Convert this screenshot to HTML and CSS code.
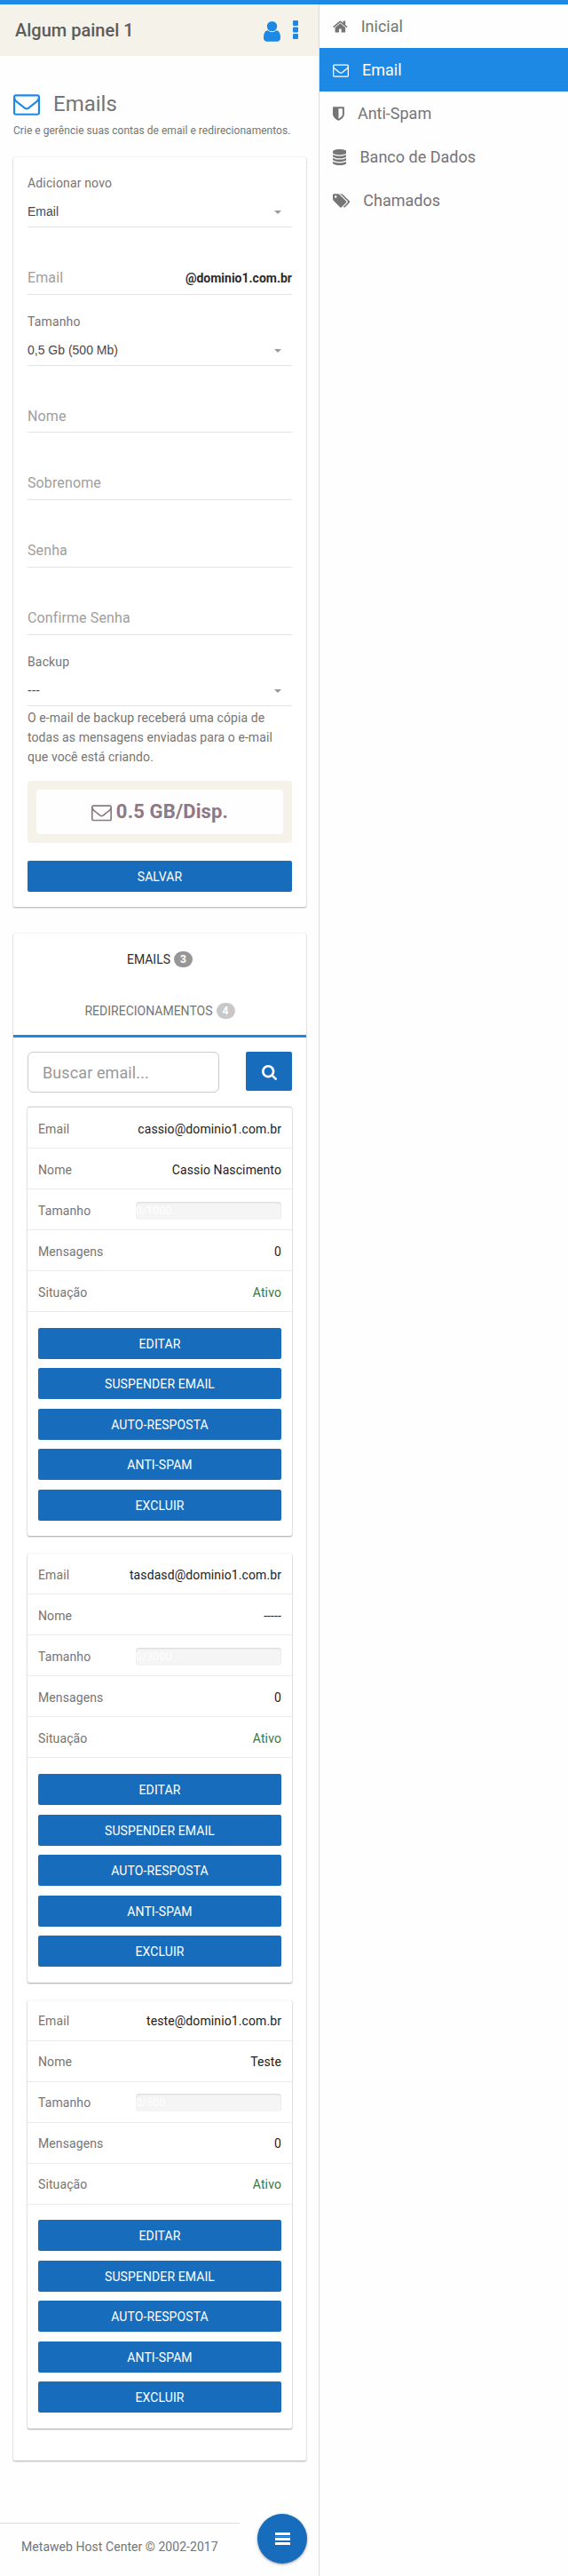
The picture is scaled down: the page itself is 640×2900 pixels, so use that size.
FILE: index.html
```html
<!DOCTYPE html>
<html lang="pt-BR">
<head>
<meta charset="utf-8">
<title>Emails</title>
<link rel="stylesheet" href="styles.css">
</head>
<body>
<svg class="defs" width="0" height="0">
  <symbol id="envelope" viewBox="0 0 1792 1792"><path d="M1664 1504v-768q-32 36-69 66-268 206-426 338-51 43-83 67t-86.500 48.500-102.500 24.500h-2q-48 0-102.500-24.500t-86.500-48.500-83-67q-158-132-426-338-37-30-69-66v768q0 13 9.500 22.500t22.500 9.500h1472q13 0 22.500-9.500t9.500-22.500zm0-1051v-24.500t-.5-13-3-12.500-5.500-9-9-7.500-14-2.500h-1472q-13 0-22.500 9.500t-9.500 22.500q0 168 147 284 193 152 401 317 6 5 35 29.500t46 37.500 44.500 31.500 50.500 27.500 43 9h2q20 0 43-9t50.500-27.500 44.500-31.500 46-37.500 35-29.500q208-165 401-317 54-43 100.500-115.500t46.500-131.500zm128-37v1088q0 66-47 113t-113 47h-1472q-66 0-113-47t-47-113v-1088q0-66 47-113t113-47h1472q66 0 113 47t47 113z"/></symbol>
</svg>
<div class="layout">
  <div class="main">
    <header class="topbar">
      <h1 class="panel-name">Algum painel 1</h1>
      <svg class="user-icon" viewBox="256 0 1280 1792"><path d="M1536 1399q0 109-62.500 187t-150.500 78h-854q-88 0-150.500-78t-62.500-187q0-85 8.500-160.500t31.500-152 58.500-131 94-89 134.500-34.500q131 128 313 128t313-128q76 0 134.500 34.500t94 89 58.500 131 31.500 152 8.500 160.500zm-256-887q0 159-112.500 271.500t-271.500 112.500-271.500-112.500-112.500-271.500 112.500-271.500 271.500-112.500 271.500 112.500 112.500 271.500z"/></svg>
      <svg class="dots-icon" viewBox="0 0 6 21"><rect width="6" height="6" rx="1"/><rect y="7.500" width="6" height="6" rx="1"/><rect y="15" width="6" height="6" rx="1"/></svg>
    </header>
    <section class="heading">
      <div class="heading-row"><svg class="heading-icon"><use href="#envelope"/></svg><h2 class="heading-title">Emails</h2></div>
      <p class="subtitle">Crie e gerêncie suas contas de email e redirecionamentos.</p>
    </section>
    <form class="card form">
      <div class="field choice first"><label class="label">Adicionar novo</label><div class="select">Email</div></div>
      <div class="field entry"><span class="placeholder">Email</span><b class="domain">@dominio1.com.br</b></div>
      <div class="field choice"><label class="label">Tamanho</label><div class="select">0,5 Gb (500 Mb)</div></div>
      <div class="field entry short"><span class="placeholder">Nome</span></div>
      <div class="field entry"><span class="placeholder">Sobrenome</span></div>
      <div class="field entry"><span class="placeholder">Senha</span></div>
      <div class="field entry"><span class="placeholder">Confirme Senha</span></div>
      <div class="field choice"><label class="label">Backup</label><div class="select">---</div></div>
      <p class="help">O e-mail de backup receberá uma cópia de todas as mensagens enviadas para o e-mail que você está criando.</p>
      <div class="quota"><div class="quota-inner"><svg class="quota-icon"><use href="#envelope"/></svg><span>0.5 GB/Disp.</span></div></div>
      <button type="button" class="btn">SALVAR</button>
    </form>
    <section class="card list">
      <nav class="tabs">
        <a class="tab active"><span>EMAILS</span><span class="badge">3</span></a>
        <a class="tab"><span>REDIRECIONAMENTOS</span><span class="badge">4</span></a>
      </nav>
      <div class="search">
        <div class="search-input">Buscar email...</div>
        <button type="button" class="search-btn"><svg class="search-icon" viewBox="64 128 1664 1664"><path d="M1216 832q0-185-131.500-316.500t-316.500-131.500-316.500 131.500-131.500 316.500 131.500 316.500 316.500 131.500 316.500-131.500 131.500-316.500zm512 832q0 52-38 90t-90 38q-54 0-90-38l-343-342q-179 124-399 124-143 0-273.500-55.500t-225-150-150-225-55.500-273.500 55.500-273.500 150-225 225-150 273.500-55.500 273.500 55.500 225 150 150 225 55.500 273.500q0 220-124 399l343 343q37 37 37 90z"/></svg></button>
      </div>
      <div class="records">
        <article class="record lined">
          <div class="row"><span>Email</span><span class="value">cassio@dominio1.com.br</span></div>
          <div class="row"><span>Nome</span><span class="value">Cassio Nascimento</span></div>
          <div class="row"><span>Tamanho</span><span class="progress">0/1000</span></div>
          <div class="row"><span>Mensagens</span><span class="value">0</span></div>
          <div class="row"><span>Situação</span><span class="ok">Ativo</span></div>
          <div class="actions"><button type="button" class="btn">EDITAR</button><button type="button" class="btn">SUSPENDER EMAIL</button><button type="button" class="btn">AUTO-RESPOSTA</button><button type="button" class="btn">ANTI-SPAM</button><button type="button" class="btn">EXCLUIR</button></div>
        </article>
        <article class="record">
          <div class="row"><span>Email</span><span class="value">tasdasd@dominio1.com.br</span></div>
          <div class="row"><span>Nome</span><span class="value">-----</span></div>
          <div class="row"><span>Tamanho</span><span class="progress">0/3000</span></div>
          <div class="row"><span>Mensagens</span><span class="value">0</span></div>
          <div class="row"><span>Situação</span><span class="ok">Ativo</span></div>
          <div class="actions"><button type="button" class="btn">EDITAR</button><button type="button" class="btn">SUSPENDER EMAIL</button><button type="button" class="btn">AUTO-RESPOSTA</button><button type="button" class="btn">ANTI-SPAM</button><button type="button" class="btn">EXCLUIR</button></div>
        </article>
        <article class="record">
          <div class="row"><span>Email</span><span class="value">teste@dominio1.com.br</span></div>
          <div class="row"><span>Nome</span><span class="value">Teste</span></div>
          <div class="row"><span>Tamanho</span><span class="progress">0/500</span></div>
          <div class="row"><span>Mensagens</span><span class="value">0</span></div>
          <div class="row"><span>Situação</span><span class="ok">Ativo</span></div>
          <div class="actions"><button type="button" class="btn">EDITAR</button><button type="button" class="btn">SUSPENDER EMAIL</button><button type="button" class="btn">AUTO-RESPOSTA</button><button type="button" class="btn">ANTI-SPAM</button><button type="button" class="btn">EXCLUIR</button></div>
        </article>
      </div>
    </section>
    <div class="bottom">
      <footer class="footer">Metaweb Host Center © 2002-2017</footer>
      <button type="button" class="fab" aria-label="Menu"><svg class="fab-icon" viewBox="0 0 17 14"><path fill="#fff" d="M0 0h17v3H0zM0 6h17v3H0zM0 11h17v3H0z"/><path fill="#4b8fcd" d="M0 4h17v1H0z"/></svg></button>
    </div>
  </div>
  <aside class="menu">
    <a class="item"><svg width="16.700" height="18" viewBox="64 0 1664 1792"><path d="M1472 992v480q0 26-19 45t-45 19h-384v-384h-256v384h-384q-26 0-45-19t-19-45v-480q0-1 .5-3t.5-3l575-474 575 474q1 2 1 6zm223-69l-62 74q-8 9-21 11h-3q-13 0-21-7l-692-577-692 577q-12 8-24 7-13-2-21-11l-62-74q-8-10-7-23.500t11-21.500l719-599q32-26 76-26t76 26l244 204v-195q0-14 9-23t23-9h192q14 0 23 9t9 23v408l219 182q10 8 11 21.500t-7 23.500z"/></svg><span>Inicial</span></a>
    <a class="item current"><svg width="18" height="18"><use href="#envelope"/></svg><span>Email</span></a>
    <a class="item"><svg width="12.900" height="18" viewBox="256 0 1280 1792"><path d="M1344 960v-640h-448v1137q119-63 213-137 235-184 235-360zm192-768v768q0 86-33.500 170.500t-83 150-118 127.500-126.500 103-121 77.500-89.500 49.500-42.500 20q-12 6-26 6t-26-6q-16-7-42.500-20t-89.500-49.500-121-77.500-126.500-103-118-127.500-83-150-33.500-170.500v-768q0-26 19-45t45-19h1152q26 0 45 19t19 45z"/></svg><span>Anti-Spam</span></a>
    <a class="item"><svg width="15.400" height="18" viewBox="128 0 1536 1792"><path d="M896 768q237 0 443-43t325-127v170q0 69-103 128t-280 93.500-385 34.500-385-34.500-280-93.500-103-128v-170q119 84 325 127t443 43zm0 768q237 0 443-43t325-127v170q0 69-103 128t-280 93.500-385 34.500-385-34.500-280-93.500-103-128v-170q119 84 325 127t443 43zm0-384q237 0 443-43t325-127v170q0 69-103 128t-280 93.500-385 34.500-385-34.500-280-93.500-103-128v-170q119 84 325 127t443 43zm0-1152q208 0 385 34.500t280 93.500 103 128v128q0 69-103 128t-280 93.500-385 34.500-385-34.500-280-93.500-103-128v-128q0-69 103-128t280-93.500 385-34.500z"/></svg><span>Banco de Dados</span></a>
    <a class="item"><svg width="19.300" height="18" viewBox="0 0 1920 1792"><path d="M448 448q0-53-37.500-90.500t-90.500-37.500-90.500 37.500-37.500 90.500 37.500 90.500 90.500 37.500 90.500-37.500 37.500-90.500zm1067 576q0 53-37 90l-491 492q-39 37-91 37-53 0-90-37l-715-716q-38-37-64.500-101t-26.500-117v-416q0-52 38-90t90-38h416q53 0 117 26.500t102 64.500l715 714q37 39 37 91zm384 0q0 53-37 90l-491 492q-39 37-91 37-36 0-59-14t-53-45l470-470q37-37 37-90 0-52-37-91l-715-714q-38-38-102-64.500t-117-26.500h224q53 0 117 26.500t102 64.500l715 714q37 39 37 91z"/></svg><span>Chamados</span></a>
  </aside>
</div>
</body>
</html>
```
FILE: styles.css
```css
* { box-sizing: border-box; }
body { margin: 0; background: #fefefe; color: #757575; font: 14px/20px Roboto, sans-serif; }
h1, h2, p { margin: 0; }
button { font: inherit; border: 0; padding: 0; }
svg { display: block; flex: none; fill: currentColor; }
.defs { position: absolute; }
.layout { display: grid; grid-template-columns: 360px 280px; height: 2900px; border-top: 5px solid #1e88e5; }
.main { display: flex; flex-direction: column; border-right: 1px solid #dcdcdc; }

.topbar { display: flex; align-items: flex-start; height: 58px; padding: 17px 23px 0 17px; background: #f5f2ea; color: #1e88e5; }
.panel-name { flex: 1; font-size: 20px; font-weight: 500; line-height: 24px; color: #5c5c5c; }
.user-icon { width: 19px; height: 26.600px; margin-right: 14px; }
.dots-icon { width: 6px; height: 21px; margin-top: 1px; }

.heading { height: 114px; padding: 39px 15px 0; }
.heading-row { display: flex; height: 30px; }
.heading-icon { width: 30px; height: 30px; margin-right: 15px; color: #1e88e5; }
.heading-title { font-size: 24px; font-weight: 400; line-height: 30px; }
.subtitle { margin-top: 5px; font-size: 12px; line-height: 20px; letter-spacing: .03px; white-space: nowrap; }

.card { width: 330px; margin-left: 15px; background: #fff; border-radius: 2px; box-shadow: 0 1px 2px rgba(0,0,0,.3), 0 0 1px rgba(0,0,0,.25); }
.form { height: 844px; padding: 0 16px; margin-bottom: 30px; }
.field { border-bottom: 1px solid #e2e2e2; }
.choice { height: 80px; padding-top: 20px; }
.choice.first { height: 79px; padding-top: 19px; }
.label { display: block; height: 32px; letter-spacing: .15px; }
.select { display: flex; justify-content: space-between; color: #484848; font-family: "Liberation Sans", sans-serif; }
.select::after { content: ""; width: 8px; height: 4px; margin: 9px 12px 0 0; background: #999; clip-path: polygon(0 0, 100% 0, 50% 100%); }
.entry { display: flex; justify-content: space-between; height: 76px; padding-top: 47px; }
.entry.short { height: 75px; }
.placeholder { font-size: 16px; color: #9e9e9e; letter-spacing: .12px; }
.domain { font-weight: 700; color: #2b2b2b; }
.help { margin-bottom: 16px; padding-top: 2px; height: 68px; line-height: 22px; letter-spacing: .08px; }
.quota { height: 70px; padding: 10px; margin-bottom: 20px; border-radius: 4px; background: #f5f2ea; }
.quota-inner { display: flex; align-items: center; justify-content: center; gap: 5px; height: 50px; border-radius: 4px; background: #fefefe; color: #8f7884; font-size: 22px; font-weight: 700; letter-spacing: .15px; }
.quota-icon { width: 23px; height: 23px; }
.btn { display: block; width: 100%; height: 35px; border-radius: 2px; background: #176dbb; color: #fff; line-height: 36px; text-align: center; letter-spacing: .1px; }

.list { height: 1719px; }
.tabs { height: 117px; border-bottom: 3px solid #1e88e5; }
.tab { display: flex; align-items: center; justify-content: center; gap: 4px; height: 58px; }
.tab.active { color: #2f2f2f; }
.badge { width: 21px; height: 18px; border-radius: 9px; background: #c8c8c8; color: #fff; font-size: 12px; font-weight: 700; line-height: 19px; text-align: center; }
.active .badge { background: #979797; }
.search { display: flex; justify-content: space-between; height: 77px; padding: 16px 16px 0; }
.search-input { width: 216px; height: 46px; padding-left: 16px; border: 1px solid #ccc; border-radius: 6px; color: #999; font-size: 18px; line-height: 46px; letter-spacing: .1px; }
.search-btn { display: flex; align-items: center; justify-content: center; width: 52px; height: 44px; padding-top: 2px; border-radius: 2px; background: #176dbb; color: #fff; }
.search-icon { width: 17px; height: 17px; }
.records { display: flex; flex-direction: column; gap: 20px; padding: 2.300px 16px 0; }
.record { height: 482.200px; background: #fff; border-radius: 2px; box-shadow: 0 1px 2px rgba(0,0,0,.35), 0 0 1px rgba(0,0,0,.25); }
.record.lined { box-shadow: 0 1px 2px rgba(0,0,0,.35), 0 0 1px rgba(0,0,0,.25), 0 -2px 0 #e8e8e8; }
.row { display: flex; align-items: center; justify-content: space-between; height: 46px; padding: 2px 12px 0; border-bottom: 1px solid #eaeaea; letter-spacing: .1px; }
.value { color: #212121; }
.ok { color: #3c763d; }
.progress { width: 164px; height: 20px; border-radius: 4px; background: #f5f5f5; box-shadow: inset 0 1px 2px rgba(0,0,0,.13); color: #fff; font-size: 12px; line-height: 21px; letter-spacing: .3px; }
.actions { display: flex; flex-direction: column; gap: 10.500px; padding: 17.700px 12px 0; }

.bottom { display: flex; justify-content: space-between; height: 130px; padding: 60px 13px 0 0; }
.footer { width: 270px; height: 60px; margin-top: 10px; padding: 16px 0 0 24px; border-top: 1px solid #dcdcdc; letter-spacing: .05px; white-space: nowrap; }
.fab { display: flex; align-items: center; justify-content: center; width: 56px; height: 56px; border-radius: 50%; background: #176dbb; box-shadow: 0 1px 3px rgba(0,0,0,.4); }
.fab-icon { width: 17px; height: 14px; }

.menu { font-size: 18px; }
.item { display: flex; align-items: center; gap: 15px; height: 49px; padding-left: 15px; color: #757575; }
.item.current { background: #1e88e5; color: #fff; }
```
